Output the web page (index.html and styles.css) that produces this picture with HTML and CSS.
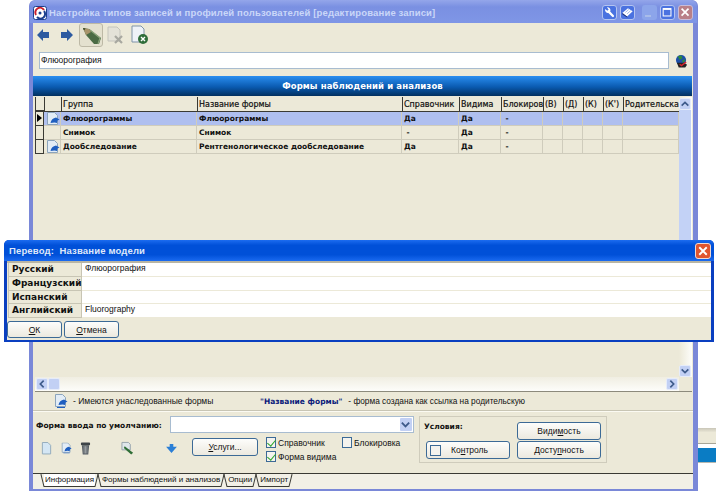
FILE: index.html
```html
<!DOCTYPE html>
<html lang="ru">

<head>
    <meta charset="UTF-8">
    <title>Настройка типов записей</title>
    <link rel="stylesheet" href="styles.css">
</head>

<body>
    <!-- краешек окна сзади -->
    <div class="back-window">
        <div class="back-grey"></div>
        <div class="back-blue"></div>
    </div>

    <div class="window main">
        <div class="titlebar">
            <svg class="app-icon" viewBox="0 0 14 14">
                <rect x="0.5" y="0.5" width="13" height="13" rx="2" fill="#fff" stroke="#1b3f8f"/>
                <path d="M3 9a4.5 4.5 0 0 1 8-5" fill="none" stroke="#c8202c" stroke-width="2"/>
                <path d="M11 5a4.5 4.5 0 0 1-7 6" fill="none" stroke="#1b3f8f" stroke-width="2"/>
                <circle cx="7" cy="7" r="1.5" fill="#1b3f8f"/>
            </svg>
            <span class="title-text">Настройка типов записей и профилей пользователей [редактирование записи]</span>
            <div class="title-buttons">
                <span class="tb tb-blue">
                    <svg viewBox="0 0 15 15"><path d="M6.500 6.500l5 5" stroke="#fff" stroke-width="2.600" stroke-linecap="round"/><path d="M2.500 3.500l2.500 2 1.500-1.500-2-2.500a3.500 3.500 0 0 1 4 4.500l-2 2a3.500 3.500 0 0 1-4-4.500z" fill="#fff"/></svg>
                </span>
                <span class="tb tb-blue">
                    <svg viewBox="0 0 15 15"><path d="M1.500 8l6.500-5.500 5.500 3.500-6.500 6z" fill="#fff"/><path d="M1.500 8l5.500 4 .5 1.500-6-4z" fill="#1c2f6e"/><path d="M5 7.500l4-3.500M7 9l4-3.500" stroke="#7d9be0" stroke-width="0.800"/></svg>
                </span>
                <span class="tb tb-gap tb-faded">
                    <svg viewBox="0 0 15 15"><rect x="3" y="10" width="6" height="2" fill="#a9bdea"/></svg>
                </span>
                <span class="tb tb-blue">
                    <svg viewBox="0 0 15 15"><rect x="2.500" y="3" width="9" height="8.500" fill="none" stroke="#fff" stroke-width="1.200"/><path d="M2.500 3.500h9" stroke="#fff" stroke-width="2"/></svg>
                </span>
                <span class="tb tb-red-faded">
                    <svg viewBox="0 0 15 15"><path d="M3 3l8 8M11 3l-8 8" stroke="#fff" stroke-width="2"/></svg>
                </span>
            </div>
        </div>

        <div class="window-body">
            <div class="toolbar">
                <svg class="tool-arrow" viewBox="0 0 14 14"><path d="M0 7l7-7v3.500h7v7H7V14z" fill="#2d5aa0"/></svg>
                <svg class="tool-arrow" viewBox="0 0 14 14"><path d="M14 7L7 0v3.500H0v7h7V14z" fill="#2d5aa0"/></svg>
                <span class="tool-btn pressed">
                    <svg viewBox="0 0 20 20">
                        <path d="M2 3l6 1 12 9-2 6h-5L5 10z" fill="#4a6b44"/>
                        <path d="M9 5l10 8-2 6" fill="none" stroke="#8aa47a" stroke-width="1.200"/>
                        <path d="M2 3l6 1 2 3-5 3z" fill="#a8946a"/>
                        <path d="M2 3l2.500.5L3 5.500z" fill="#2e4020"/>
                    </svg>
                </span>
                <span class="tool-btn">
                    <svg viewBox="0 0 20 20"><path d="M3 2h9l3 3v11H3z" fill="#e4e2d8" stroke="#c4c4bc"/><path d="M10 11l7 7M17 11l-7 7" stroke="#a8a8a0" stroke-width="2.200"/></svg>
                </span>
                <span class="tool-btn">
                    <svg viewBox="0 0 20 20"><path d="M3 1h9l3 3v13H3z" fill="#eef2f8" stroke="#7f93a8"/><circle cx="14" cy="14" r="5" fill="#2f6d3a"/><path d="M12 12l4 4M16 12l-4 4" stroke="#fff" stroke-width="1.400"/></svg>
                </span>
            </div>

            <div class="name-row">
                <div class="name-input">Флюорография</div>
                <svg class="globe" viewBox="0 0 14 14">
                    <circle cx="6.500" cy="6" r="5.500" fill="#1d4fa8"/>
                    <path d="M3 2l4-1 1 3-3 2zM8 6l3-1-1 3-2 1z" fill="#2f8a3a"/>
                    <path d="M2 9h8l3 2-2 3H4z" fill="#222"/>
                    <path d="M5 10.500l2 1.500 5-4" fill="none" stroke="#d8232a" stroke-width="1.500"/>
                </svg>
            </div>

            <div class="section-head">Формы наблюдений и анализов</div>

            <div class="grid-box">
                <div class="grid-area">
                    <div class="grid">
                        <div class="g-row g-head">
                            <div class="c c-ind"></div>
                            <div class="c c-icon"></div>
                            <div class="c c-group">Группа</div>
                            <div class="c c-name">Название формы</div>
                            <div class="c c-ref">Справочник</div>
                            <div class="c c-vis">Видима</div>
                            <div class="c c-lock">Блокировка</div>
                            <div class="c c-s">(В)</div>
                            <div class="c c-s">(Д)</div>
                            <div class="c c-s">(К)</div>
                            <div class="c c-s">(К')</div>
                            <div class="c c-par">Родительская</div>
                        </div>
                        <div class="g-row selected">
                            <div class="c c-ind"><span class="pointer"></span></div>
                            <div class="c c-icon"><svg class="form-icon" viewBox="0 0 14 14"><use href="#inherit"/></svg></div>
                            <div class="c c-group">Флюорограммы</div>
                            <div class="c c-name">Флюорограммы</div>
                            <div class="c c-ref">Да</div>
                            <div class="c c-vis">Да</div>
                            <div class="c c-lock">&nbsp;-</div>
                            <div class="c c-s"></div>
                            <div class="c c-s"></div>
                            <div class="c c-s"></div>
                            <div class="c c-s"></div>
                            <div class="c c-par"></div>
                        </div>
                        <div class="g-row">
                            <div class="c c-ind"></div>
                            <div class="c c-icon"></div>
                            <div class="c c-group">Снимок</div>
                            <div class="c c-name">Снимок</div>
                            <div class="c c-ref">&nbsp;-</div>
                            <div class="c c-vis">Да</div>
                            <div class="c c-lock">&nbsp;-</div>
                            <div class="c c-s"></div>
                            <div class="c c-s"></div>
                            <div class="c c-s"></div>
                            <div class="c c-s"></div>
                            <div class="c c-par"></div>
                        </div>
                        <div class="g-row">
                            <div class="c c-ind"></div>
                            <div class="c c-icon"><svg class="form-icon" viewBox="0 0 14 14"><use href="#inherit"/></svg></div>
                            <div class="c c-group">Дообследование</div>
                            <div class="c c-name">Рентгенологическое дообследование</div>
                            <div class="c c-ref">Да</div>
                            <div class="c c-vis">Да</div>
                            <div class="c c-lock">&nbsp;-</div>
                            <div class="c c-s"></div>
                            <div class="c c-s"></div>
                            <div class="c c-s"></div>
                            <div class="c c-s"></div>
                            <div class="c c-par"></div>
                        </div>
                    </div>
                    <div class="vscroll">
                        <span class="sb-btn"><svg viewBox="0 0 9 9"><path d="M1.500 6l3-3 3 3" fill="none" stroke="#3d5a8a" stroke-width="1.500"/></svg></span>
                        <span class="sb-thumb-v"></span>
                        <span class="sb-track"></span>
                        <span class="sb-btn"><svg viewBox="0 0 9 9"><path d="M1.500 3l3 3 3-3" fill="none" stroke="#3d5a8a" stroke-width="1.500"/></svg></span>
                    </div>
                </div>
                <div class="hscroll">
                    <span class="sb-btn"><svg viewBox="0 0 9 9"><path d="M6 1.500l-3 3 3 3" fill="none" stroke="#3d5a8a" stroke-width="1.500"/></svg></span>
                    <span class="sb-btn"></span>
                    <span class="sb-track"></span>
                    <span class="sb-btn"><svg viewBox="0 0 9 9"><path d="M3 1.500l3 3-3 3" fill="none" stroke="#3d5a8a" stroke-width="1.500"/></svg></span>
                    <span class="sb-corner"></span>
                </div>
            </div>

            <div class="legend">
                <svg class="form-icon" viewBox="0 0 14 14"><use href="#inherit"/></svg>
                <span class="legend-a">- Имеются унаследованные формы</span>
                <span class="legend-name">"Название формы"</span>
                <span class="legend-b">- форма создана как ссылка на родительскую</span>
            </div>

            <div class="lower">
                <div class="lower-left">
                    <div class="form-row">
                        <span class="form-label">Форма ввода по умолчанию:</span>
                        <div class="combo">
                            <span class="combo-btn"><svg viewBox="0 0 9 9"><path d="M1.500 3l3 3 3-3" fill="none" stroke="#3d5a8a" stroke-width="1.500"/></svg></span>
                        </div>
                    </div>
                    <div class="actions">
                        <svg class="act act-new" viewBox="0 0 12 14"><path d="M1.500 1h6l3 3v9.500h-9z" fill="#d4e6f4" stroke="#8fa8ba"/></svg>
                        <svg class="act act-inh" viewBox="0 0 14 14"><use href="#inherit"/></svg>
                        <svg class="act act-del" viewBox="0 0 12 14"><path d="M2 4h8l-1 10H3z" fill="#555c62"/><rect x="1" y="1" width="10" height="3" rx="1" fill="#3e4448"/><path d="M4.500 5v8M6 5v8M7.500 5v8" stroke="#cfd3d4" stroke-width="0.600"/></svg>
                        <svg class="act act-edit" viewBox="0 0 14 14"><path d="M1 1h7l2 2v6H1z" fill="#dfe6ea" stroke="#93a0aa"/><path d="M4 5l9 7-2 2-8-7z" fill="#2f6e36"/></svg>
                        <svg class="act act-down" viewBox="0 0 12 10"><path d="M0 3h4V0h4v3h4L6 10z" fill="#2b7fd6"/></svg>
                        <button class="btn btn-services"><u>У</u>слуги...</button>
                        <div class="checks">
                            <label class="check"><span class="box on"></span>Справочник</label>
                            <label class="check"><span class="box on"></span>Форма видима</label>
                        </div>
                        <label class="check check-lock"><span class="box"></span>Блокировка</label>
                    </div>
                </div>
                <div class="conditions">
                    <div class="cond-left">
                        <div class="cond-title">Условия:</div>
                        <button class="btn btn-cond btn-control"><span class="box"></span><span class="control-text">Ко<u>н</u>троль</span></button>
                    </div>
                    <div class="cond-right">
                        <button class="btn btn-cond">Види<u>м</u>ость</button>
                        <button class="btn btn-cond">Досту<u>п</u>ность</button>
                    </div>
                </div>
            </div>

            <div class="tabs">
                <span class="tab active">Информация</span>
                <span class="tab">Формы наблюдений и анализов</span>
                <span class="tab">Опции</span>
                <span class="tab">Импорт</span>
            </div>
        </div>
    </div>

    <!-- окно перевода поверх основного -->
    <div class="window dialog">
        <div class="dialog-title">
            <span>Перевод:&nbsp; Название модели</span>
            <span class="dialog-close"><svg viewBox="0 0 15 15"><path d="M3.500 3.500l8 8M11.500 3.500l-8 8" stroke="#fff" stroke-width="2"/></svg></span>
        </div>
        <div class="dialog-body">
            <div class="lang-row">
                <div class="lang">Русский</div>
                <div class="lang-value">Флюорография</div>
            </div>
            <div class="lang-row">
                <div class="lang">Французский</div>
                <div class="lang-value"></div>
            </div>
            <div class="lang-row">
                <div class="lang">Испанский</div>
                <div class="lang-value"></div>
            </div>
            <div class="lang-row">
                <div class="lang">Английский</div>
                <div class="lang-value">Fluorography</div>
            </div>
            <div class="dialog-actions">
                <button class="btn btn-dialog"><u>О</u>К</button>
                <button class="btn btn-dialog"><u>О</u>тмена</button>
            </div>
        </div>
    </div>

    <svg class="defs" width="0" height="0">
        <symbol id="inherit" viewBox="0 0 14 14">
            <path d="M1.500 .5h7l3 3v9h-10z" fill="#e2ecf6" stroke="#8ba4bc"/>
            <path d="M4.500 11c.5-3 2.500-5 5.500-5.500l3.500 2-2 1-.5 2.500-2.500-.5z" fill="#1f5fc0"/>
            <path d="M3 13.500h8" stroke="#1f5fc0"/>
        </symbol>
    </svg>
</body>

</html>
```

FILE: styles.css
```css
* {
    margin: 0;
    padding: 0;
    box-sizing: border-box;
}

body {
    width: 716px;
    height: 493px;
    overflow: hidden;
    background-color: #ffffff;
    font-family: "Liberation Sans", "Noto Sans", sans-serif;
    font-size: 9px;
    color: #111111;
    position: relative;
}

/* окно сзади, торчит справа */
.back-window {
    position: absolute;
    left: 698px;
    top: 428px;
    width: 18px;
}

.back-grey {
    height: 16px;
    background: linear-gradient(#c9c6b8, #ece9d8 30%, #ece9d8);
    border-bottom: 1px solid #a8a698;
}

.back-blue {
    height: 15px;
    margin-top: 4px;
    background-color: #0a7cc4;
    border-bottom: 1px solid #b8b8b0;
}

/* основное окно */
.main {
    position: absolute;
    left: 29px;
    top: 0;
    width: 669px;
    height: 491px;
    background-color: #7a88d8;
    border-radius: 6px 6px 0 0;
    padding: 0 5px 2px 4px;
    display: flex;
    flex-direction: column;
}

.titlebar {
    height: 23px;
    display: flex;
    align-items: center;
    gap: 2px;
    flex-shrink: 0;
    background: linear-gradient(#94a6ea, #7a90e2 30%, #7f96e6);
    margin: 0 -4px 0 -3px;
    padding: 0 4px 0 3px;
    border-radius: 6px 6px 0 0;
}

.app-icon {
    width: 14px;
    height: 14px;
    margin-top: 2px;
}

.title-text {
    font-size: 9.500px;
    font-weight: 700;
    letter-spacing: 0.150px;
    color: #cad7f8;
    margin-top: 2px;
    white-space: nowrap;
    flex: 1;
}

.title-buttons {
    display: flex;
    gap: 3px;
    margin-top: 2px;
}

.tb {
    width: 15px;
    height: 15px;
    border-radius: 3px;
    display: block;
}

.tb svg {
    display: block;
    width: 13px;
    height: 13px;
}

.tb-blue {
    background-color: #4a72e0;
    border: 1px solid #b4c4f0;
}

.tb-gap {
    margin-left: 4px;
}

.tb-faded {
    background-color: #8ca5ea;
}

.tb-faded svg {
    width: 15px;
    height: 15px;
}

.tb-red-faded {
    background-color: #b98088;
    border: 1px solid #c8bcd8;
}

.window-body {
    flex: 1;
    background-color: #ece9d8;
    display: flex;
    flex-direction: column;
    min-height: 0;
}

.toolbar {
    height: 24px;
    display: flex;
    align-items: center;
    padding-left: 4px;
    flex-shrink: 0;
}

.tool-arrow {
    width: 12px;
    height: 12px;
    margin-right: 12px;
}

.tool-arrow + .tool-btn {
    margin-left: -6px;
}

.tool-btn {
    width: 24px;
    height: 24px;
    display: flex;
    align-items: center;
    justify-content: center;
}

.tool-btn svg {
    width: 20px;
    height: 20px;
}

.pressed {
    border: 1px solid #bdb9a6;
    border-radius: 3px;
    background-color: #e4e1cf;
}

.name-row {
    height: 17px;
    margin-top: 5px;
    display: flex;
    align-items: center;
    padding-left: 6px;
    flex-shrink: 0;
}

.name-input {
    width: 630px;
    height: 17px;
    background-color: #ffffff;
    border: 1px solid #a8bcd0;
    line-height: 15px;
    padding-left: 1px;
    font-size: 8.500px;
}

.globe {
    width: 13px;
    height: 14px;
    margin-left: 6px;
}

.section-head {
    height: 20px;
    margin: 7px 1px 0 0;
    background: linear-gradient(#2a8ef0, #0a5ab0 55%, #02305f);
    color: #ffffff;
    font-family: "DejaVu Sans", sans-serif;
    font-size: 8.500px;
    font-weight: 700;
    letter-spacing: 0.100px;
    line-height: 20px;
    text-align: center;
    flex-shrink: 0;
}

.grid-box {
    flex: 1;
    min-height: 0;
    margin: 1px 1px 0 2px;
    border-bottom: 1px solid #8c8a7c;
    display: flex;
    flex-direction: column;
}

.grid-area {
    flex: 1;
    min-height: 0;
    display: flex;
}

.grid {
    flex: 1;
    min-width: 0;
}

.g-row {
    display: flex;
    height: 14px;
    border-bottom: 1px solid #cfccbc;
    font-family: "DejaVu Sans", sans-serif;
    font-size: 7.500px;
    font-weight: 700;
    line-height: 13px;
    white-space: nowrap;
}

.g-head {
    height: 15px;
    border-bottom: 1px solid #3a3a34;
    font-weight: 400;
    font-size: 8px;
    line-height: 15px;
    -webkit-text-stroke: 0.200px #111111;
}

.g-head .c {
    border-left: 1px solid #3a3a34;
    border-right: 0;
    padding-left: 1px;
}

.selected {
    background-color: #afbfef;
}

.c {
    overflow: hidden;
    padding-left: 2px;
    border-right: 1px solid #cfccbc;
    flex-shrink: 0;
}

.c-ind {
    width: 9px;
    height: 14px;
    border-left: 1px solid #3a3a34;
    border-right: 1px solid #3a3a34;
    border-bottom: 1px solid #3a3a34;
    padding: 0;
    background-color: #ece9d8;
}

.c-icon {
    width: 17px;
    padding: 0;
}

.c-group {
    width: 136px;
}

.c-name {
    width: 205px;
}

.c-ref {
    width: 57px;
}

.c-vis {
    width: 42px;
}

.c-lock {
    width: 42px;
}

.c-s {
    width: 20px;
}

.c-par {
    width: 56px;
}

.pointer {
    display: block;
    width: 0;
    height: 0;
    margin: 2px 0 0 1px;
    border-left: 5px solid #000000;
    border-top: 4px solid transparent;
    border-bottom: 4px solid transparent;
}

.form-icon {
    display: block;
    width: 14px;
    height: 14px;
}

.c-icon .form-icon {
    margin-left: 2px;
}

.vscroll {
    width: 13px;
    display: flex;
    flex-direction: column;
    padding-top: 1px;
    background: linear-gradient(90deg, #ece9d8, #fdfdfa);
}

.sb-btn {
    display: block;
    width: 12px;
    height: 12px;
    background-color: #c2d0f4;
    border: 1px solid #e6ecfa;
    border-radius: 2px;
    flex-shrink: 0;
}

.sb-btn svg {
    display: block;
    width: 10px;
    height: 10px;
}

.sb-thumb-v {
    display: block;
    width: 12px;
    height: 135px;
    background-color: #c3d2f6;
    flex-shrink: 0;
}

.sb-track {
    flex: 1;
}

.hscroll {
    height: 14px;
    display: flex;
    align-items: center;
    padding-left: 1px;
    background: linear-gradient(#f0eee2, #fdfdfa);
    flex-shrink: 0;
}

.sb-corner {
    width: 13px;
    height: 14px;
    margin-left: 1px;
    background-color: #ece9d8;
}

.legend {
    height: 18px;
    display: flex;
    align-items: center;
    padding-left: 21px;
    flex-shrink: 0;
    font-size: 8.500px;
    white-space: nowrap;
}

.legend-a {
    margin-left: 5px;
    width: 187px;
}

.legend-name {
    font-family: "DejaVu Sans", sans-serif;
    font-size: 7.500px;
    font-weight: 700;
    color: #0a1a7a;
    margin-right: 6px;
}

.legend-b {
    font-size: 8.300px;
}

.lower {
    height: 63px;
    display: flex;
    flex-shrink: 0;
    padding: 5px 0 0 3px;
    border-top: 1px solid #c8c5b4;
    box-shadow: inset 0 1px 0 #fbfaf2;
}

.lower-left {
    width: 383px;
}

.form-row {
    display: flex;
    align-items: center;
    height: 17px;
}

.form-label {
    font-family: "DejaVu Sans", sans-serif;
    font-weight: 700;
    font-size: 7.500px;
    width: 134px;
    margin-top: 2px;
}

.combo {
    width: 244px;
    height: 17px;
    background-color: #ffffff;
    border: 1px solid #a8bcd0;
    display: flex;
    justify-content: flex-end;
    padding: 1px;
}

.combo-btn {
    width: 12px;
    background-color: #c2d0f4;
    border-radius: 1px;
    display: flex;
    align-items: center;
}

.combo-btn svg {
    width: 11px;
    height: 11px;
}

.actions {
    display: flex;
    align-items: flex-start;
    margin-top: 4px;
    height: 32px;
}

.act {
    width: 11px;
    height: 14px;
    margin-top: 4px;
    flex-shrink: 0;
}

.act-new {
    margin-left: 5px;
}

.act-inh {
    margin-left: 9px;
}

.act-del {
    margin-left: 8px;
}

.act-edit {
    width: 13px;
    margin-left: 30px;
}

.act-down {
    margin-left: 32px;
    margin-top: 7px;
    width: 11px;
    height: 9px;
}

.btn {
    font-family: "Liberation Sans", sans-serif;
    font-size: 8.500px;
    color: #111111;
    background: linear-gradient(#fdfdfb, #ece9df);
    border: 1px solid #3c6a96;
    border-radius: 3px;
}

.btn-services {
    width: 66px;
    height: 18px;
    margin-left: 15px;
    margin-top: 1px;
    flex-shrink: 0;
}

.checks {
    margin-left: 8px;
    width: 69px;
    display: flex;
    flex-direction: column;
    gap: 3px;
}

.check {
    display: flex;
    align-items: center;
    gap: 2px;
    height: 11px;
    white-space: nowrap;
    font-size: 8.500px;
}

.check-lock {
    margin-left: 7px;
}

.box {
    display: block;
    width: 10px;
    height: 11px;
    border: 1px solid #3c6a96;
    background-color: #f4f3ee;
    flex-shrink: 0;
}

.box.on::after {
    content: "";
    display: block;
    width: 4px;
    height: 7px;
    margin: 0 0 0 2px;
    border-right: 1.500px solid #2aa52a;
    border-bottom: 1.500px solid #2aa52a;
    transform: rotate(40deg);
}

.conditions {
    width: 188px;
    height: 47px;
    border: 1px solid #cfccbc;
    display: flex;
    padding: 5px 5px 3px 6px;
    justify-content: space-between;
}

.cond-left {
    display: flex;
    flex-direction: column;
    justify-content: space-between;
}

.cond-title {
    font-family: "DejaVu Sans", sans-serif;
    font-weight: 700;
    font-size: 7.500px;
    margin-left: -2px;
}

.cond-right {
    display: flex;
    flex-direction: column;
    gap: 1px;
}

.btn-cond {
    width: 84px;
    height: 18px;
}

.btn-control {
    display: flex;
    align-items: center;
    padding-left: 3px;
}

.btn-control .box {
    width: 11px;
    height: 11px;
}

.control-text {
    margin-left: 10px;
}

.tabs {
    height: 16px;
    display: flex;
    align-items: flex-start;
    gap: 6px;
    padding-left: 11px;
    background-color: #f2f0e6;
    border-top: 1px solid #3a3a34;
    flex-shrink: 0;
    font-size: 8px;
    white-space: nowrap;
}

.tab {
    position: relative;
    height: 13px;
    line-height: 12px;
    padding: 0 1px;
    border-bottom: 1px solid #3a3a34;
}

.tab::before,
.tab::after {
    content: "";
    position: absolute;
    top: 0;
    width: 1px;
    height: 13px;
    background-color: #3a3a34;
}

.tab::before {
    left: -2px;
    transform: rotate(-14deg);
}

.tab::after {
    right: -2px;
    transform: rotate(14deg);
}

.tab.active {
    background-color: #ffffff;
}

/* окно перевода */
.dialog {
    position: absolute;
    left: 4px;
    top: 240px;
    width: 710px;
    height: 102px;
    background-color: #0a3fc0;
    border-radius: 5px 5px 0 0;
    padding: 0 3px 2px 3px;
    display: flex;
    flex-direction: column;
}

.dialog-title {
    height: 21px;
    display: flex;
    align-items: center;
    justify-content: space-between;
    margin: 0 -3px;
    padding: 0 3px 0 5px;
    border-radius: 5px 5px 0 0;
    background: linear-gradient(#1c6cf0, #0050d8 25%, #0050d8 70%, #1a6af0);
    color: #dfe8fa;
    font-size: 9.500px;
    font-weight: 700;
    letter-spacing: 0.150px;
    flex-shrink: 0;
}

.dialog-close {
    width: 16px;
    height: 16px;
    background-color: #e0552f;
    border: 1px solid #f0d8d0;
    border-radius: 3px;
}

.dialog-close svg {
    display: block;
    width: 14px;
    height: 14px;
}

.dialog-body {
    flex: 1;
    background-color: #ece9d8;
    border-top: 2px solid #b8b5a4;
}

.lang-row {
    height: 13.750px;
    display: flex;
}

.lang {
    width: 74px;
    margin-left: 1px;
    font-family: "DejaVu Sans", sans-serif;
    font-size: 9px;
    font-weight: 700;
    line-height: 13px;
    padding-left: 3px;
    border: 1px solid #c8c5b4;
    border-top: 0;
    white-space: nowrap;
}

.lang-value {
    flex: 1;
    background-color: #ffffff;
    border-bottom: 1px solid #ece9d8;
    padding-left: 3px;
    font-size: 8.500px;
    line-height: 11px;
}

.dialog-actions {
    display: flex;
    gap: 2px;
    padding-top: 3px;
}

.btn-dialog {
    width: 55px;
    height: 17px;
}

.defs {
    position: absolute;
}
```
